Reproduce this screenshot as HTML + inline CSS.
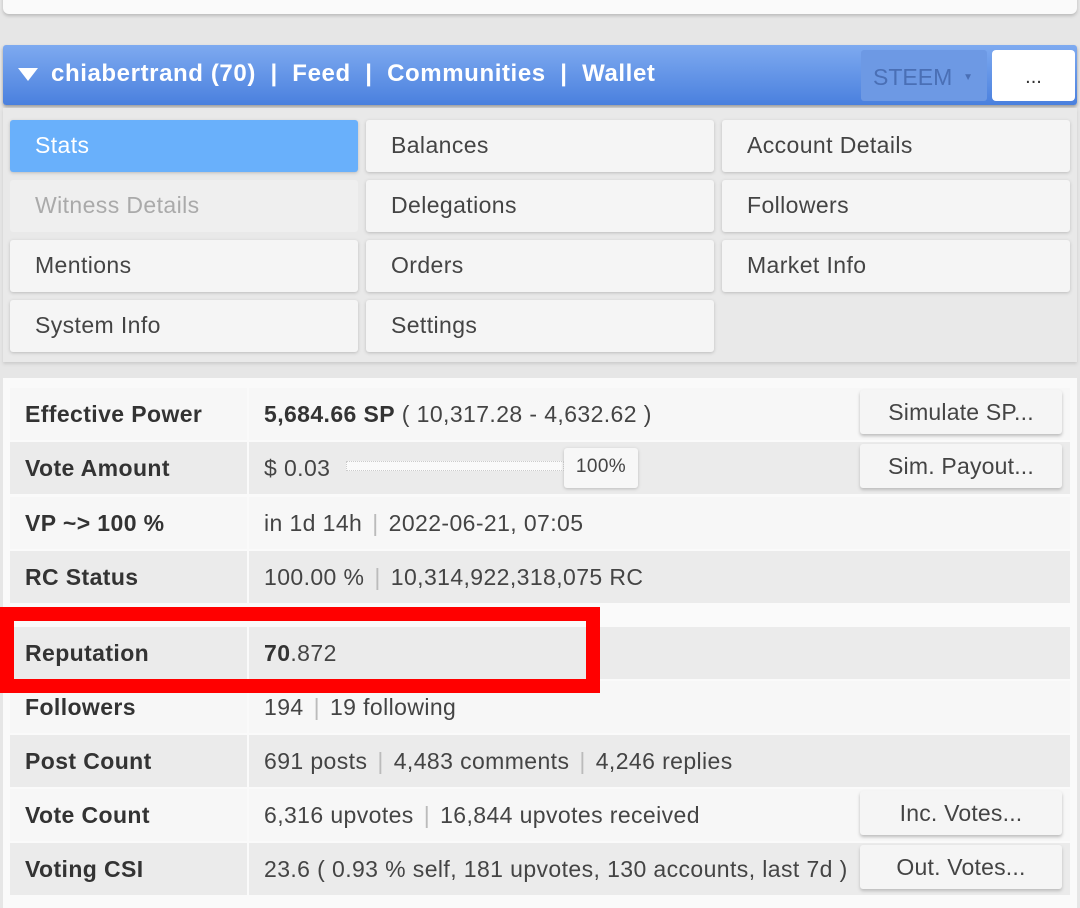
<!DOCTYPE html>
<html><head><meta charset="utf-8"><style>
*{box-sizing:border-box;margin:0;padding:0}
body{width:1080px;height:900px;background:#e6e6e6;font-family:"Liberation Sans",sans-serif;position:relative;overflow:hidden;color:#333}
.top{position:absolute;left:3px;top:-10px;width:1074px;height:24px;background:#fafafa;border-radius:6px;box-shadow:0 2px 3px #bbb}
.hdr{position:absolute;left:3px;top:45px;width:1074px;height:60px;background:linear-gradient(#7eaaf0,#4a80de);border-radius:3px;box-shadow:0 2px 3px #999}
.hdr .t{position:absolute;left:48px;top:15px;color:#fff;font-size:24px;font-weight:bold;letter-spacing:0.6px;white-space:pre}
.tri{position:absolute;left:15px;top:23px;width:0;height:0;border-left:10px solid transparent;border-right:10px solid transparent;border-top:13px solid #fff}
.steem{position:absolute;left:858px;top:5px;width:126px;height:51px;background:#6d99e4;border-radius:3px;color:#4a6fb5;font-size:23px;padding:14px 12px}
.steem span{font-size:10px;position:absolute;right:14px;top:22px}
.dots{position:absolute;left:989px;top:5px;width:83px;height:51px;background:#fff;border-radius:4px;text-align:center;font-size:20px;padding-top:16px;color:#333}
.panel{position:absolute;left:3px;top:108px;width:1074px;height:254px;background:#e9e9e9;box-shadow:0 2px 3px #ccc}
.tab{position:absolute;width:348px;height:52px;background:#f5f5f5;border-radius:3px;box-shadow:0 1px 3px #bbb;font-size:23px;padding:12px 25px;color:#444;letter-spacing:0.4px}
.tab.a{background:#69b0fb;color:#fff}
.tab.d{background:#efefef;color:#aaa;box-shadow:none}
.tbl{position:absolute;left:3px;top:378px;width:1074px;height:530px;background:#fafafa}
.row{position:absolute;left:10px;width:1060px;height:52px;font-size:23px;letter-spacing:0.4px}
.row .l{position:absolute;left:0;top:0;width:237px;height:52px;padding:13px 15px;font-weight:bold;color:#333}
.row .v{position:absolute;left:239px;top:0;right:0;height:52px;padding:13px 15px;color:#444;white-space:nowrap}
.o .l,.o .v{background:#f7f7f7}.e .l,.e .v{background:#ebebeb}
.sep{color:#bbb;margin:0 10px}
.btn{position:absolute;right:8px;top:2px;width:202px;height:44px;background:#f5f5f5;border-radius:3px;box-shadow:0 2px 3px #bbb;text-align:center;padding-top:9px;color:#444;letter-spacing:0.2px}
.red{position:absolute;left:0;top:607px;width:600px;height:86px;border:14px solid #ff0000}
</style></head><body>
<div class="top"></div>
<div class="hdr"><div class="tri"></div><div class="t">chiabertrand (70)  |  Feed  |  Communities  |  Wallet</div>
<div class="steem">STEEM<span>▼</span></div><div class="dots">...</div></div>
<div class="panel"></div>
<div class="tab a" style="left:10px;top:120px">Stats</div>
<div class="tab" style="left:366px;top:120px">Balances</div>
<div class="tab" style="left:722px;top:120px">Account Details</div>
<div class="tab d" style="left:10px;top:180px">Witness Details</div>
<div class="tab" style="left:366px;top:180px">Delegations</div>
<div class="tab" style="left:722px;top:180px">Followers</div>
<div class="tab" style="left:10px;top:240px">Mentions</div>
<div class="tab" style="left:366px;top:240px">Orders</div>
<div class="tab" style="left:722px;top:240px">Market Info</div>
<div class="tab" style="left:10px;top:300px">System Info</div>
<div class="tab" style="left:366px;top:300px">Settings</div>
<div class="tbl"></div>
<div class="row o" style="top:388px"><div class="l">Effective Power</div><div class="v"><b style="color:#333">5,684.66 SP</b> ( 10,317.28 - 4,632.62 )</div><div class="btn">Simulate SP...</div></div>
<div class="row e" style="top:442px"><div class="l">Vote Amount</div><div class="v">$ 0.03<span style="position:absolute;left:97px;top:19px;width:218px;height:10px;border:1px dotted #ccc;background:#fafafa"></span><span style="position:absolute;left:315px;top:6px;width:74px;height:40px;background:#f7f7f7;border-radius:3px;box-shadow:0 1px 3px #bbb;font-size:19px;text-align:center;padding-top:8px">100%</span></div><div class="btn">Sim. Payout...</div></div>
<div class="row o" style="top:497px"><div class="l">VP ~&gt; 100 %</div><div class="v">in 1d 14h<span class="sep">|</span>2022-06-21, 07:05</div></div>
<div class="row e" style="top:551px"><div class="l">RC Status</div><div class="v">100.00 %<span class="sep">|</span>10,314,922,318,075 RC</div></div>
<div class="row e" style="top:627px"><div class="l">Reputation</div><div class="v"><b style="color:#333">70</b>.872</div></div>
<div class="row o" style="top:681px"><div class="l">Followers</div><div class="v">194<span class="sep">|</span>19 following</div></div>
<div class="row e" style="top:735px"><div class="l">Post Count</div><div class="v">691 posts<span class="sep">|</span>4,483 comments<span class="sep">|</span>4,246 replies</div></div>
<div class="row o" style="top:789px"><div class="l">Vote Count</div><div class="v">6,316 upvotes<span class="sep">|</span>16,844 upvotes received</div><div class="btn">Inc. Votes...</div></div>
<div class="row e" style="top:843px"><div class="l">Voting CSI</div><div class="v">23.6 ( 0.93 % self, 181 upvotes, 130 accounts, last 7d )</div><div class="btn">Out. Votes...</div></div>
<div class="red"></div>
</body></html>
